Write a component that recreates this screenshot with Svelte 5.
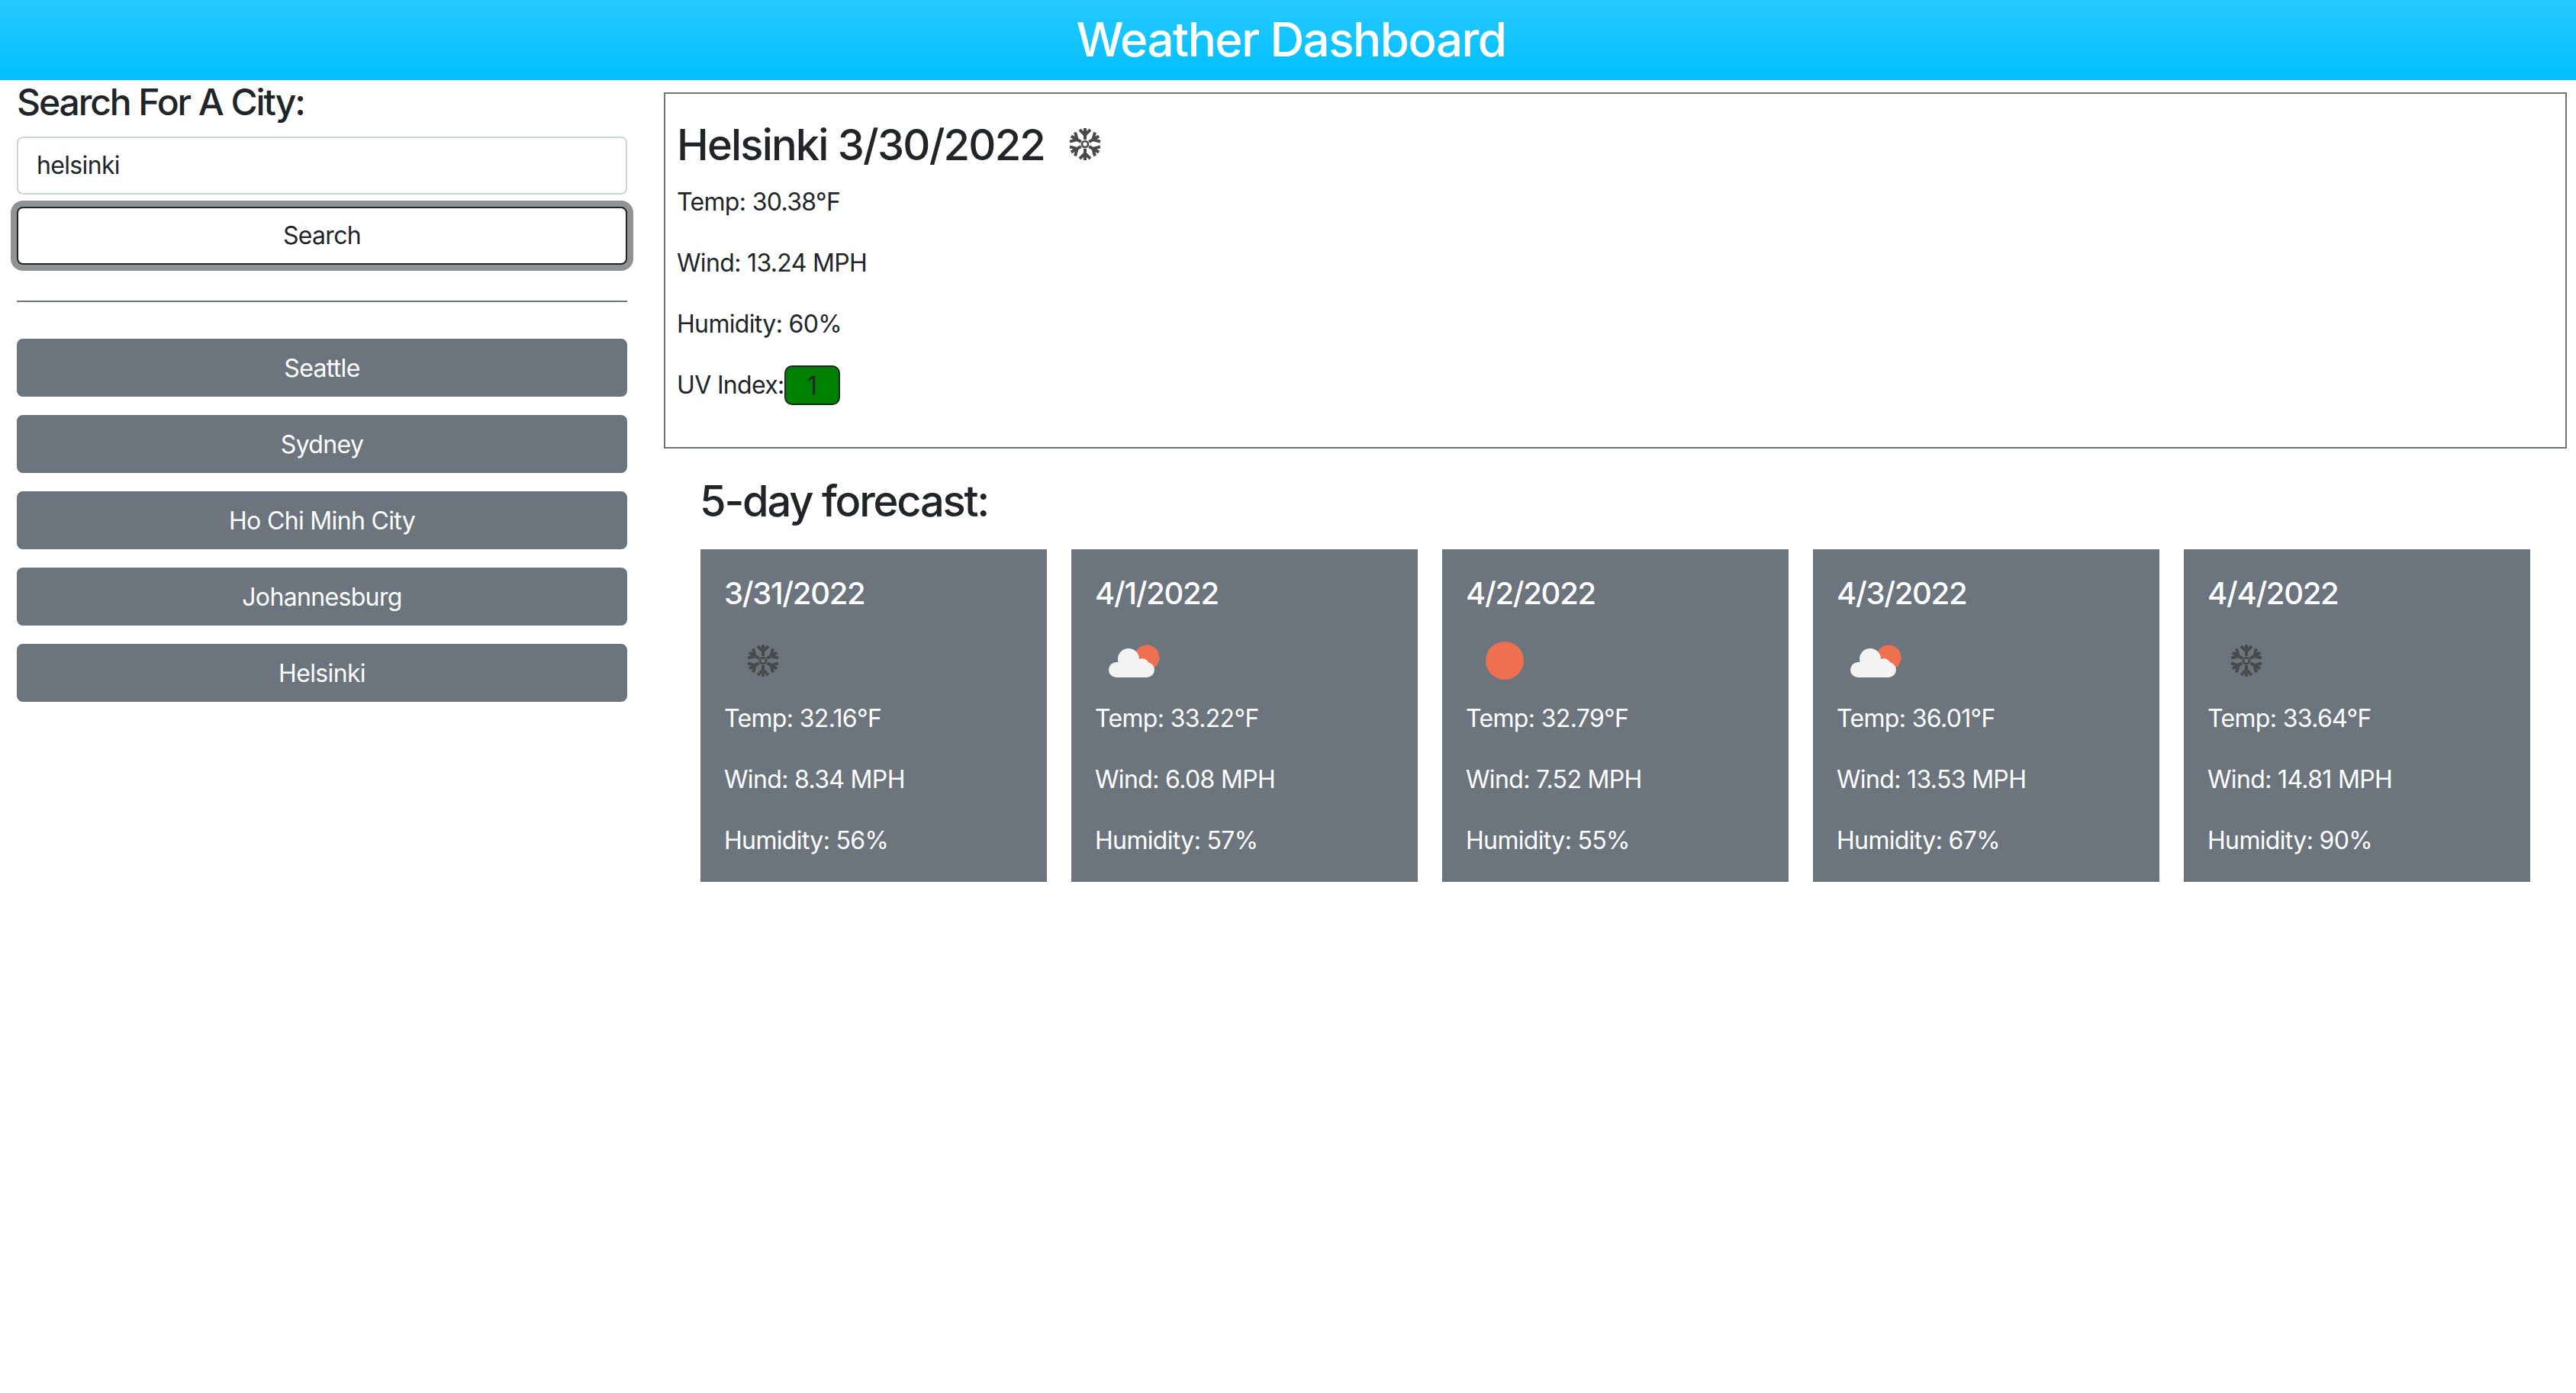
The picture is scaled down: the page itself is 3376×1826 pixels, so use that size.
<script>
  const cities = ['Seattle', 'Sydney', 'Ho Chi Minh City', 'Johannesburg', 'Helsinki'];
  const forecast = [
    { date: '3/31/2022', icon: 'snow', temp: '32.16', wind: '8.34', humidity: 56 },
    { date: '4/1/2022', icon: 'cloud', temp: '33.22', wind: '6.08', humidity: 57 },
    { date: '4/2/2022', icon: 'sun', temp: '32.79', wind: '7.52', humidity: 55 },
    { date: '4/3/2022', icon: 'cloud', temp: '36.01', wind: '13.53', humidity: 67 },
    { date: '4/4/2022', icon: 'snow', temp: '33.64', wind: '14.81', humidity: 90 }
  ];
  const arms = [0, 60, 120, 180, 240, 300];
</script>

{#snippet weatherIcon(kind)}
  <svg class="icon" viewBox="0 0 100 100" aria-hidden="true">
    {#if kind === 'snow'}
      <g fill="none" stroke="#48494b" stroke-width="4">
        <circle cx="50" cy="50" r="4" stroke-width="2.6" />
        {#each arms as a}
          <g transform="rotate({a} 50 50)">
            <path d="M50 44V29" />
            <path d="M43 31l7 7 7-7" />
          </g>
        {/each}
      </g>
    {:else if kind === 'sun'}
      <circle cx="50" cy="50" r="25" fill="#ee7050" />
    {:else}
      <circle cx="67" cy="46" r="16.5" fill="#ee7050" />
      <g fill="#f3f3f3">
        <rect x="17" y="52" width="60" height="20" rx="10" />
        <circle cx="43" cy="48" r="14" />
        <circle cx="61" cy="56" r="9" />
      </g>
    {/if}
  </svg>
{/snippet}

<header class="top">
  <h1>Weather Dashboard</h1>
</header>

<div class="layout">
  <aside class="side">
    <h4>Search For A City:</h4>
    <input class="city-input" type="text" value="helsinki" />
    <button class="btn search">Search</button>
    <hr />
    <div class="history">
      {#each cities as city}
        <button class="btn city">{city}</button>
      {/each}
    </div>
  </aside>

  <main class="main">
    <section class="today">
      <h3 class="today-title"><span>Helsinki 3/30/2022</span>{@render weatherIcon('snow')}</h3>
      <p>Temp: 30.38°F</p>
      <p>Wind: 13.24 MPH</p>
      <p>Humidity: 60%</p>
      <p class="uv">UV Index:<span class="uv-badge">1</span></p>
    </section>

    <section class="forecast">
      <h3>5-day forecast:</h3>
      <div class="cards">
        {#each forecast as day}
          <article class="card">
            <h5>{day.date}</h5>
            {@render weatherIcon(day.icon)}
            <p>Temp: {day.temp}°F</p>
            <p>Wind: {day.wind} MPH</p>
            <p>Humidity: {day.humidity}%</p>
          </article>
        {/each}
      </div>
    </section>
  </main>
</div>

<style>
  :global(body) {
    margin: 0;
    background: #fff;
    color: #212529;
    font-family: Inter, "Liberation Sans", sans-serif;
    font-size: 32px;
    line-height: 48px;
    letter-spacing: -0.66px;
  }

  h1, h3, h4, h5, p { margin: 0; }

  .top {
    height: 105px;
    background: linear-gradient(#26c9ff, #00bfff);
    color: #fff;
    display: flex;
    align-items: center;
    justify-content: center;
    padding-left: 8px;
  }

  .top h1 {
    font-size: 62px;
    font-weight: 500;
    line-height: 1.2;
    letter-spacing: -1.6px;
  }

  .layout {
    display: grid;
    grid-template-columns: 844px 1fr;
  }

  .side {
    padding: 0 22px;
  }

  .side h4 {
    font-size: 48px;
    font-weight: 500;
    line-height: 1.2;
    letter-spacing: -2.1px;
    margin-bottom: 16px;
  }

  .city-input {
    display: block;
    box-sizing: border-box;
    width: 100%;
    height: 76px;
    padding: 12px 24px;
    border: 2px solid #ced4da;
    border-radius: 8px;
    font: inherit;
    letter-spacing: inherit;
    color: #212529;
    background: #fff;
  }

  .btn {
    display: block;
    box-sizing: border-box;
    width: 100%;
    height: 76px;
    border-radius: 8px;
    font: inherit;
    letter-spacing: inherit;
    text-align: center;
    padding: 12px 24px;
  }

  .search {
    margin-top: 16px;
    background: #fff;
    color: #212529;
    border: 2px solid #212529;
    box-shadow: 0 0 0 8px rgba(33, 37, 41, 0.5);
  }

  .side hr {
    margin: 47px 0 48px;
    border: 0;
    height: 2px;
    background: #6c757d;
  }

  .history {
    display: flex;
    flex-direction: column;
    gap: 24px;
  }

  .city {
    background: #6c757d;
    border: 2px solid #6c757d;
    color: #fff;
    padding: 13px 24px 11px;
  }

  .main {
    margin: 16px 12px 0 26px;
  }

  .today {
    border: 2px solid #6c757d;
    padding: 16px 16px 16px 15px;
    height: 467px;
    box-sizing: border-box;
  }

  .today-title {
    display: flex;
    align-items: flex-start;
    font-size: 56px;
    font-weight: 500;
    line-height: 1.2;
    letter-spacing: -1.8px;
    height: 102px;
  }

  .today-title span {
    margin-top: 18px;
  }

  .today-title .icon {
    margin-left: 3px;
  }

  .today p {
    margin-bottom: 32px;
  }

  .uv {
    display: flex;
    align-items: center;
    height: 48px;
  }

  .uv-badge {
    box-sizing: border-box;
    width: 73px;
    height: 52px;
    background: green;
    border: 2px solid #212529;
    border-radius: 10px;
    text-align: center;
    line-height: 50px;
  }

  .icon {
    display: block;
    width: 100px;
    height: 100px;
    flex: none;
    filter: blur(0.5px);
  }

  .forecast {
    padding: 36px 48px 0;
  }

  .forecast h3 {
    font-size: 56px;
    font-weight: 500;
    line-height: 1.2;
    letter-spacing: -2.2px;
    margin-bottom: 29px;
    margin-left: -1px;
  }

  .cards {
    display: grid;
    grid-template-columns: repeat(5, 1fr);
    gap: 32px;
  }

  .card {
    background: #6c757d;
    color: #fff;
    padding: 34px 32px 0 31px;
    height: 436px;
    box-sizing: border-box;
  }

  .card h5 {
    font-size: 40px;
    font-weight: 500;
    line-height: 1.2;
    letter-spacing: -1.3px;
    margin-bottom: 14px;
  }

  .card .icon {
    margin: 0 0 2px 1px;
  }

  .card p {
    margin-bottom: 32px;
  }

  .card p:last-child {
    margin-bottom: 0;
  }
</style>
